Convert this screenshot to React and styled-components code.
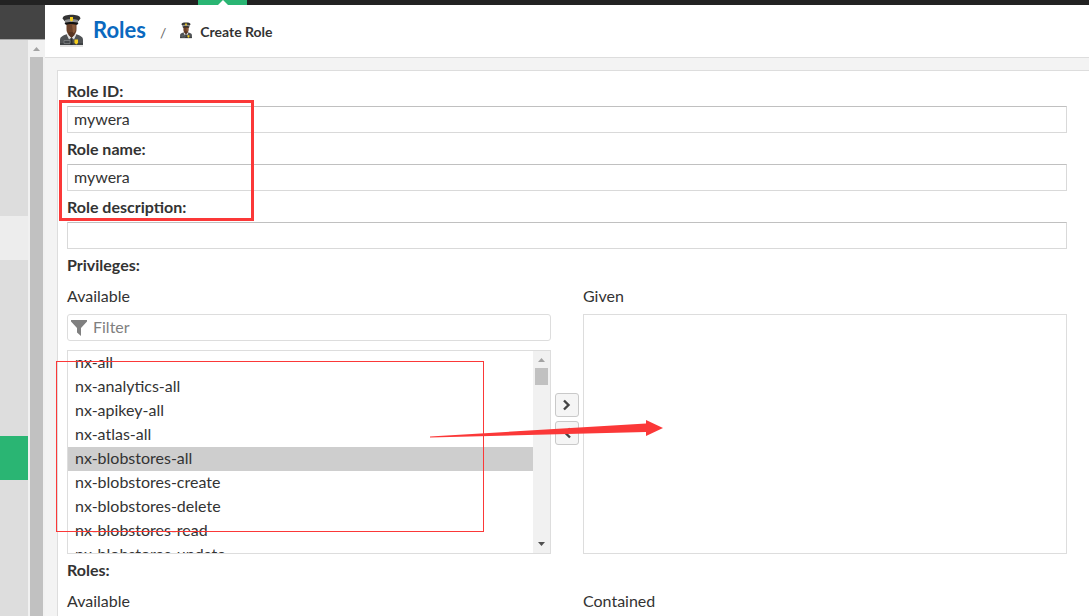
import React, { useState } from "react";
import styled, { createGlobalStyle } from "styled-components";

const privileges = [
  "nx-all",
  "nx-analytics-all",
  "nx-apikey-all",
  "nx-atlas-all",
  "nx-blobstores-all",
  "nx-blobstores-create",
  "nx-blobstores-delete",
  "nx-blobstores-read",
  "nx-blobstores-update",
];

const menu = ["", "", "", "", "hover", "", "", "", "", "active", "", "", ""];

const menuColors = {
  hover: "#ededed",
  active: "#2ab573",
};

const GlobalStyle = createGlobalStyle`
  * {
    box-sizing: border-box;
  }
  body {
    margin: 0;
    background-color: #f3f3f3;
    color: #333;
    font-family: "Lato", "Liberation Sans", sans-serif;
    font-size: 16px;
  }
`;

const Page = styled.div`
  position: relative;
  display: flex;
  flex-direction: column;
  height: 100vh;
  overflow: hidden;
`;

const TopBar = styled.div`
  flex: none;
  height: 5px;
  padding-left: 198px;
  background-color: #222;
`;

const ActiveMode = styled.div`
  display: flex;
  justify-content: center;
  width: 49px;
  height: 5px;
  background-color: #2ab573;
`;

const Columns = styled.div`
  display: flex;
  flex: 1;
  min-height: 0;
`;

const Sidebar = styled.aside`
  display: flex;
  flex-direction: column;
  flex: none;
  width: 45px;
`;

const SidebarHead = styled.div`
  flex: none;
  height: 35px;
  background-color: #444;
  border-bottom: 1px solid #aaa;
`;

const SidebarBody = styled.div`
  display: flex;
  flex: 1;
  min-height: 0;
`;

const Menu = styled.nav`
  flex: 1;
  overflow: hidden;
  background-color: #ddd;
`;

const MenuItem = styled.a`
  display: block;
  height: 44px;
  background-color: ${(props) => menuColors[props.$state] || "#ddd"};
`;

const ScrollTrack = styled.div`
  display: flex;
  flex-direction: column;
  align-items: center;
  flex: none;
  width: 17px;
  background-color: #f1f1f1;
`;

const ScrollArrow = styled.svg`
  flex: none;
  width: 17px;
  height: 17px;
  fill: ${(props) => props.$color};
`;

const ScrollThumb = styled.div`
  flex: none;
  width: 13px;
  height: ${(props) => props.$height};
  background-color: #c1c1c1;
`;

const Spacer = styled.div`
  flex: 1;
`;

const Content = styled.main`
  display: flex;
  flex-direction: column;
  flex: 1;
  min-width: 0;
`;

const Header = styled.header`
  display: flex;
  align-items: center;
  flex: none;
  height: 53px;
  padding: 0 0 2px 14px;
  background-color: #fff;
  border-bottom: 1px solid #ddd;
`;

const Title = styled.h1`
  margin: 0 14px 0 9px;
  color: #0a69bf;
  font-size: 22px;
  line-height: 28px;
`;

const Slash = styled.span`
  margin: 4px 13px 0 0;
  color: #666;
  font-size: 14px;
`;

const Crumb = styled.h2`
  margin: 4px 0 0 7px;
  font-size: 14px;
  line-height: 20px;
`;

const Panel = styled.form`
  flex: 1;
  margin: 12px 0 0 12px;
  padding: 4px 22px 0 9px;
  background-color: #fff;
  border-top: 1px solid #ddd;
  border-left: 1px solid #ddd;
`;

const Label = styled.label`
  display: block;
  height: 31px;
  font-weight: 700;
  line-height: 31px;
`;

const GroupTitle = styled(Label).attrs({ as: "div" })``;

const TextInput = styled.input`
  display: block;
  width: 100%;
  height: 27px;
  padding: 0 6px 2px;
  color: #333;
  background-color: #fff;
  border: 1px solid #d9d9d9;
  border-top-color: #c0c0c0;
  border-radius: 0;
  font-family: inherit;
  font-size: 16px;
  outline: none;
`;

const Transfer = styled.div`
  display: grid;
  grid-template-columns: 1fr 32px 1fr;
`;

const Side = styled.div`
  display: flex;
  flex-direction: column;
  min-width: 0;
`;

const SideTitle = styled.label`
  height: 34px;
  line-height: 32px;
`;

const FilterBox = styled.div`
  display: flex;
  align-items: center;
  height: 27px;
  margin-bottom: 9px;
  padding-left: 3px;
  border: 1px solid #ddd;
  border-radius: 3px;
`;

const FilterInput = styled.input`
  flex: 1;
  min-width: 0;
  padding: 0 6px 2px;
  border: none;
  outline: none;
  font-family: inherit;
  font-size: 16px;
  &::placeholder {
    color: #808080;
  }
`;

const ListBox = styled.div`
  display: flex;
  height: ${(props) => props.$height};
  border: 1px solid #ddd;
`;

const List = styled.select`
  flex: 1;
  min-width: 0;
  height: 100%;
  padding: 0;
  color: #333;
  background-color: #fff;
  border: none;
  outline: none;
  overflow: hidden;
  scrollbar-width: none;
  font-family: inherit;
  font-size: 16px;
  option {
    height: 24px;
    padding: 1px 7px 0;
  }
  option:checked {
    color: #333;
    background: #cecece linear-gradient(#cecece, #cecece);
  }
`;

const Buttons = styled.div`
  display: flex;
  flex-direction: column;
  align-items: center;
  gap: 4px;
  padding-top: 113px;
`;

const MoveBtn = styled.button`
  display: flex;
  align-items: center;
  justify-content: center;
  width: 24px;
  height: 24px;
  padding: 0;
  background-color: #f5f5f5;
  border: 1px solid #c9c9c9;
  border-radius: 3px;
`;

// red marks drawn on top of the page
const Mark = styled.div`
  position: absolute;
  top: ${(props) => props.$top}px;
  left: ${(props) => props.$left}px;
  width: ${(props) => props.$width}px;
  height: ${(props) => props.$height}px;
  border: ${(props) => props.$line}px solid #fb3838;
  pointer-events: none;
`;

const Arrow = styled.svg`
  position: absolute;
  top: 418px;
  left: 428px;
  pointer-events: none;
`;

const Officer = ({ width, height }) => (
  <svg width={width} height={height} viewBox="0 0 25 33">
    <path d="M1 32h23" stroke="#c4c4c4" strokeWidth="1" />
    <path d="M1 31v-5c0-3 2-4 7-6h9c5 2 7 3 7 6v5z" fill="#505355" />
    <path d="M1 31v-2h23v2z" fill="#3f4244" />
    <path d="M7.500 20.200L9 19l3.500 5L16 19l1.500 1.200-2.500 5.300-2.500-2-2.500 2z" fill="#e2e2e2" />
    <path d="M7.500 9h10v6c0 4-2 6.500-5 6.500s-5-2.500-5-6.500z" fill="#6b4128" />
    <path d="M9.500 18h6v3l-3 3-3-3z" fill="#583420" />
    <path d="M13 11h3.500v4.500c0 2-1 3.500-2.500 3.500z" fill="#8a5a3a" />
    <path d="M11.800 24.500h1.400l.6 6.500h-2.600z" fill="#2c2e30" />
    <path d="M5 26.500h6v3H5z" fill="#44474a" stroke="#85888a" strokeWidth="0.7" />
    <path d="M15.500 25.500h3.500v3.500l-1.700 1.500-1.800-1.500z" fill="#f6cf1c" />
    <path d="M3.500 4.500C4 1.500 8 .8 12.500.8s8.500.7 9 3.700L19 7.500H6z" fill="#333" />
    <path d="M6 6c4-1.500 9-1.500 13 0v3.500c-4-1-9-1-13 0z" fill="#8d8d8d" />
    <path d="M5.500 9c4-1.200 10-1.200 14 0L18 11c-3-1.300-8-1.300-11 0z" fill="#111" />
    <path d="M11 3h3v3.500L12.500 7.500 11 6.500z" fill="#f6cf1c" />
  </svg>
);

const Scrollbar = ({ thumb }) => (
  <ScrollTrack>
    <ScrollArrow $color="#a3a3a3" viewBox="0 0 17 17">
      <path d="M5 11h7L8.500 7z" />
    </ScrollArrow>
    <ScrollThumb $height={thumb} />
    <Spacer />
    <ScrollArrow $color="#505050" viewBox="0 0 17 17">
      <path d="M5 6h7L8.500 10z" />
    </ScrollArrow>
  </ScrollTrack>
);

const App = () => {
  const [form, setForm] = useState({ id: "mywera", name: "mywera", description: "" });
  const [selected, setSelected] = useState(["nx-blobstores-all"]);

  const update = (e) => setForm({ ...form, [e.target.name]: e.target.value });

  const pick = (e) =>
    setSelected(Array.from(e.target.selectedOptions, (option) => option.value));

  return (
    <Page>
      <GlobalStyle />
      <TopBar>
        <ActiveMode>
          <svg width="10" height="5" viewBox="0 0 10 5">
            <path d="M0 5l5-5 5 5z" fill="#fff" />
          </svg>
        </ActiveMode>
      </TopBar>
      <Columns>
        <Sidebar>
          <SidebarHead />
          <SidebarBody>
            <Menu>
              {menu.map((state, i) => (
                <MenuItem key={i} href="#" $state={state} aria-label={`Menu ${i + 1}`} />
              ))}
            </Menu>
            <Scrollbar thumb="100%" />
          </SidebarBody>
        </Sidebar>
        <Content>
          <Header>
            <Officer width={25} height={33} />
            <Title>Roles</Title>
            <Slash>/</Slash>
            <Officer width={14} height={17} />
            <Crumb>Create Role</Crumb>
          </Header>
          <Panel onSubmit={(e) => e.preventDefault()}>
            <Label htmlFor="id">Role ID:</Label>
            <TextInput id="id" name="id" value={form.id} onChange={update} />
            <Label htmlFor="name">Role name:</Label>
            <TextInput id="name" name="name" value={form.name} onChange={update} />
            <Label htmlFor="description">Role description:</Label>
            <TextInput
              id="description"
              name="description"
              value={form.description}
              onChange={update}
            />
            <GroupTitle>Privileges:</GroupTitle>
            <Transfer>
              <Side>
                <SideTitle htmlFor="available">Available</SideTitle>
                <FilterBox>
                  <svg width="16" height="16" viewBox="0 0 16 16">
                    <path d="M0 0h16v1.500L10 8v8l-4-3.500V8L0 1.500z" fill="#808080" />
                  </svg>
                  <FilterInput placeholder="Filter" aria-label="Filter" />
                </FilterBox>
                <ListBox $height="204px">
                  <List id="available" multiple value={selected} onChange={pick}>
                    {privileges.map((name) => (
                      <option key={name} value={name}>
                        {name}
                      </option>
                    ))}
                  </List>
                  <Scrollbar thumb="17px" />
                </ListBox>
              </Side>
              <Buttons>
                <MoveBtn type="button" aria-label="Add">
                  <svg width="10" height="12" viewBox="0 0 10 12">
                    <path d="M2 1.500L6.500 6 2 10.500" fill="none" stroke="#444" strokeWidth="2.400" />
                  </svg>
                </MoveBtn>
                <MoveBtn type="button" aria-label="Remove">
                  <svg width="10" height="12" viewBox="0 0 10 12">
                    <path d="M8 1.500L3.500 6 8 10.500" fill="none" stroke="#444" strokeWidth="2.400" />
                  </svg>
                </MoveBtn>
              </Buttons>
              <Side>
                <SideTitle htmlFor="given">Given</SideTitle>
                <ListBox $height="240px">
                  <List id="given" multiple />
                </ListBox>
              </Side>
            </Transfer>
            <GroupTitle>Roles:</GroupTitle>
            <Transfer>
              <SideTitle as="div">Available</SideTitle>
              <span />
              <SideTitle as="div">Contained</SideTitle>
            </Transfer>
          </Panel>
        </Content>
      </Columns>
      <Mark $top={100} $left={59} $width={195} $height={121} $line={3} />
      <Mark $top={361} $left={56} $width={428} $height={171} $line={1} />
      <Arrow width="240" height="22" viewBox="0 0 240 22">
        <path d="M2 18.500L218 5.500V2l17 8-17 8v-4L2 19.500z" fill="#fb3838" />
      </Arrow>
    </Page>
  );
};

export default App;
